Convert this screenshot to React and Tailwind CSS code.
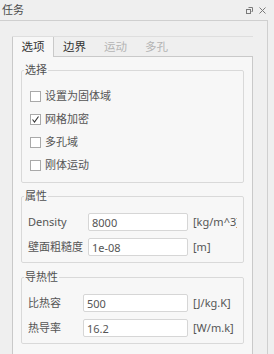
import React from 'react';

const tabs = [
    { name: '选项', active: true },
    { name: '边界' },
    { name: '运动', disabled: true },
    { name: '多孔', disabled: true },
];

const options = [
    { label: '设置为固体域', checked: false },
    { label: '网格加密', checked: true },
    { label: '多孔域', checked: false },
    { label: '刚体运动', checked: false },
];

const Group = ({ title, className, children }) => (
    <fieldset className={`border border-[#d9d9d9] rounded-[2px] px-0 ${className}`}>
        <legend className="ml-[2px] px-[1px] text-[11px] leading-[14px] text-[#505050]">{title}</legend>
        {children}
    </fieldset>
);

const Field = ({ label, value, unit, labelW, inputW }) => (
    <div className="flex items-center h-[18px]">
        <span className={`${labelW} shrink-0 whitespace-nowrap`}>{label}</span>
        <input
            readOnly
            defaultValue={value}
            className={`${inputW} h-[18px] shrink-0 bg-white border border-[#d6d6d6] rounded-[2px] pl-[3px] text-[11px] text-[#555] outline-none`}
        />
        <span className="ml-[5px] w-[44px] overflow-hidden whitespace-nowrap">{unit}</span>
    </div>
);

export default function App() {
    return (
        <div className="w-[274px] h-[354px] overflow-hidden bg-[#efefef] font-['Noto_Sans','Noto_Sans_CJK_SC',sans-serif] text-[11px] text-[#555] flex flex-col">
            {/* title bar */}
            <div className="h-[20px] shrink-0 flex items-center justify-between pl-[2px] pr-[8px]">
                <span className="text-[#4a4a4a]">任务</span>
                <div className="flex items-center gap-[6px]">
                    <svg width="7" height="7" viewBox="0 0 7 7" fill="none" stroke="#7a7a7a" strokeWidth="1">
                        <path d="M2.5 0.5h4v4h-1" />
                        <rect x="0.5" y="2.5" width="4" height="4" />
                    </svg>
                    <svg width="7" height="7" viewBox="0 0 7 7" fill="none" stroke="#7a7a7a" strokeWidth="1">
                        <path d="M0.5 0.5l6 6M6.5 0.5l-6 6" />
                    </svg>
                </div>
            </div>

            {/* dock body */}
            <div className="w-[268px] flex-1 flex flex-col border-t border-r border-[#cfcfcf] pl-[12px] pt-[15px]">
                <div className="w-[241px] flex-1 flex flex-col">
                    {/* tab bar */}
                    <div className="h-[20px] shrink-0 flex border-t border-[#dedede]">
                        {tabs.map((t) =>
                            t.active ? (
                                <div
                                    key={t.name}
                                    className="relative z-10 w-[42px] h-[20px] shrink-0 flex items-center justify-center bg-[#f7f7f7] border-l border-r border-[#c9c9c9] text-[11.5px] text-[#333]"
                                >
                                    {t.name}
                                </div>
                            ) : (
                                <div
                                    key={t.name}
                                    className={`w-[41px] h-[19px] shrink-0 flex items-center justify-center text-[11.5px] ${t.disabled ? 'text-[#b4b4b4]' : 'text-[#333]'}`}
                                >
                                    {t.name}
                                </div>
                            )
                        )}
                    </div>

                    {/* tab pane */}
                    <div className="flex-1 bg-[#f7f7f7] border border-b-0 border-[#c9c9c9] px-[8px] pt-[6px]">
                        <Group title="选择">
                            <div className="pl-[8px] pt-[8px] pb-[5px]">
                                {options.map((o) => (
                                    <div key={o.label} className="h-[23px] flex items-center gap-[4px]">
                                        <span className="w-[11px] h-[11px] bg-white border border-[#a9a9a9] flex items-center justify-center">
                                            {o.checked && (
                                                <svg width="9" height="9" viewBox="0 0 9 9" fill="none" stroke="#333" strokeWidth="1.1">
                                                    <path d="M1.5 4.5l2 2.5 4-5.5" />
                                                </svg>
                                            )}
                                        </span>
                                        <span>{o.label}</span>
                                    </div>
                                ))}
                            </div>
                        </Group>

                        <Group title="属性" className="mt-[6px]">
                            <div className="pl-[6px] pr-[5px] pt-[10px] pb-[6px] flex flex-col gap-[7px]">
                                <Field label="Density" value="8000" unit="[kg/m^3]" labelW="w-[60px]" inputW="w-[100px]" />
                                <Field label="壁面粗糙度" value="1e-08" unit="[m]" labelW="w-[60px]" inputW="w-[100px]" />
                            </div>
                        </Group>

                        <Group title="导热性" className="mt-[7px]">
                            <div className="pl-[6px] pr-[5px] pt-[10px] pb-[6px] flex flex-col gap-[7px]">
                                <Field label="比热容" value="500" unit="[J/kg.K]" labelW="w-[55px]" inputW="w-[105px]" />
                                <Field label="热导率" value="16.2" unit="[W/m.k]" labelW="w-[55px]" inputW="w-[105px]" />
                            </div>
                        </Group>
                    </div>
                </div>
            </div>
        </div>
    );
}
